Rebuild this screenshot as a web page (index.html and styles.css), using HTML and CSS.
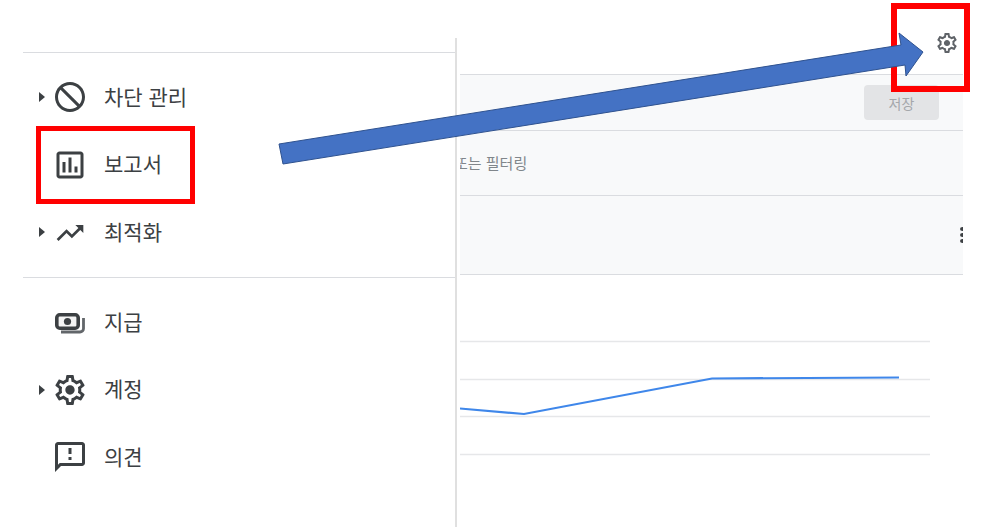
FILE: index.html
```html
<!DOCTYPE html>
<html lang="ko">
<head>
    <meta charset="UTF-8">
    <meta name="viewport" content="width=device-width, initial-scale=1.0">
    <title>보고서 설정</title>
    <link rel="stylesheet" href="styles.css">
</head>
<body>
    <div class="page">
        <nav class="sidenav">
            <ul class="nav-group">
                <li class="nav-item">
                    <span class="caret"></span>
                    <svg class="nav-icon" viewBox="0 0 24 24"><path d="M12 2C6.48 2 2 6.48 2 12s4.48 10 10 10 10-4.48 10-10S17.52 2 12 2zM20 12c0-4.42-3.58-8-8-8-1.85 0-3.55.63-4.9 1.69L18.31 16.9C19.37 15.55 20 13.85 20 12zm-8 8c1.85 0 3.55-.63 4.9-1.69L5.69 7.1C4.63 8.45 4 10.15 4 12c0 4.42 3.58 8 8 8z" fill-rule="evenodd"/></svg>
                    <span>차단 관리</span>
                </li>
                <li class="nav-item">
                    <span></span>
                    <svg class="nav-icon" viewBox="0 0 24 24"><path d="M19 3H5c-1.1 0-2 .9-2 2v14c0 1.1.9 2 2 2h14c1.1 0 2-.9 2-2V5c0-1.1-.9-2-2-2zm0 16H5V5h14v14zM7 10h2v7H7zm4-3h2v10h-2zm4 6h2v4h-2z"/></svg>
                    <span>보고서</span>
                </li>
                <li class="nav-item">
                    <span class="caret"></span>
                    <svg class="nav-icon trend-icon" viewBox="0 0 24 24"><path d="M16 6l2.29 2.29-4.88 4.88-4-4L2 16.59 3.41 18l6-6 4 4 6.3-6.29L22 12V6z"/></svg>
                    <span>최적화</span>
                </li>
            </ul>
            <ul class="nav-group">
                <li class="nav-item">
                    <span></span>
                    <svg class="nav-icon money-icon" viewBox="0 0 36 36">
                        <rect class="money-bill" x="4.8" y="10.8" width="21.4" height="13.4" rx="3"/>
                        <circle class="money-dot" cx="15.5" cy="17.5" r="3.6"/>
                        <path class="money-stack" d="M31.5 14v10.5a3.5 3.5 0 0 1-3.5 3.5H9"/>
                    </svg>
                    <span>지급</span>
                </li>
                <li class="nav-item">
                    <span class="caret"></span>
                    <svg class="nav-icon" viewBox="0 0 24 24"><path d="M19.43 12.98c.04-.32.07-.64.07-.98 0-.34-.03-.66-.07-.98l2.11-1.65c.19-.15.24-.42.12-.64l-2-3.46c-.09-.16-.26-.25-.44-.25-.06 0-.12.01-.17.03l-2.49 1c-.52-.4-1.08-.73-1.69-.98l-.38-2.65C14.46 2.18 14.25 2 14 2h-4c-.25 0-.46.18-.49.42l-.38 2.65c-.61.25-1.17.59-1.69.98l-2.49-1c-.06-.02-.12-.03-.18-.03-.17 0-.34.09-.43.25l-2 3.46c-.13.22-.07.49.12.64l2.11 1.65c-.04.32-.07.65-.07.98 0 .33.03.66.07.98l-2.11 1.65c-.19.15-.24.42-.12.64l2 3.46c.09.16.26.25.44.25.06 0 .12-.01.17-.03l2.49-1c.52.4 1.08.73 1.69.98l.38 2.65c.03.24.24.42.49.42h4c.25 0 .46-.18.49-.42l.38-2.65c.61-.25 1.17-.59 1.69-.98l2.49 1c.06.02.12.03.18.03.17 0 .34-.09.43-.25l2-3.46c.12-.22.07-.49-.12-.64l-2.11-1.65zm-1.98-1.71c.04.31.05.52.05.73 0 .21-.02.43-.05.73l-.14 1.13.89.7 1.08.84-.7 1.21-1.27-.51-1.04-.42-.9.68c-.43.32-.84.56-1.25.73l-1.06.43-.16 1.13-.2 1.35h-1.4l-.19-1.35-.16-1.13-1.06-.43c-.43-.18-.83-.41-1.23-.71l-.91-.7-1.06.43-1.27.51-.7-1.21 1.08-.84.89-.7-.14-1.13c-.03-.31-.05-.54-.05-.74s.02-.43.05-.73l.14-1.13-.89-.7-1.08-.84.7-1.21 1.27.51 1.04.42.9-.68c.43-.32.84-.56 1.25-.73l1.06-.43.16-1.13.2-1.35h1.39l.19 1.35.16 1.13 1.06.43c.43.18.83.41 1.23.71l.91.7 1.06-.43 1.27-.51.7 1.21-1.07.85-.89.7.14 1.13zM12 8.9c-1.71 0-3.1 1.39-3.1 3.1s1.39 3.1 3.1 3.1 3.1-1.39 3.1-3.1-1.39-3.1-3.1-3.1z"/></svg>
                    <span>계정</span>
                </li>
                <li class="nav-item">
                    <span></span>
                    <svg class="nav-icon" viewBox="0 0 24 24"><path d="M20 2H4c-1.1 0-1.99.9-1.99 2L2 22l4-4h14c1.1 0 2-.9 2-2V4c0-1.1-.9-2-2-2zm0 14H5.17L4 17.17V4h16v12zm-9-4h2v2h-2zm0-6h2v4h-2z"/></svg>
                    <span>의견</span>
                </li>
            </ul>
        </nav>

        <main class="content">
            <header class="topbar">
                <svg class="gear" viewBox="0 0 24 24"><path d="M19.43 12.98c.04-.32.07-.64.07-.98 0-.34-.03-.66-.07-.98l2.11-1.65c.19-.15.24-.42.12-.64l-2-3.46c-.09-.16-.26-.25-.44-.25-.06 0-.12.01-.17.03l-2.49 1c-.52-.4-1.08-.73-1.69-.98l-.38-2.65C14.46 2.18 14.25 2 14 2h-4c-.25 0-.46.18-.49.42l-.38 2.65c-.61.25-1.17.59-1.69.98l-2.49-1c-.06-.02-.12-.03-.18-.03-.17 0-.34.09-.43.25l-2 3.46c-.13.22-.07.49.12.64l2.11 1.65c-.04.32-.07.65-.07.98 0 .33.03.66.07.98l-2.11 1.65c-.19.15-.24.42-.12.64l2 3.46c.09.16.26.25.44.25.06 0 .12-.01.17-.03l2.49-1c.52.4 1.08.73 1.69.98l.38 2.65c.03.24.24.42.49.42h4c.25 0 .46-.18.49-.42l.38-2.65c.61-.25 1.17-.59 1.69-.98l2.49 1c.06.02.12.03.18.03.17 0 .34-.09.43-.25l2-3.46c.12-.22.07-.49-.12-.64l-2.11-1.65zm-1.98-1.71c.04.31.05.52.05.73 0 .21-.02.43-.05.73l-.14 1.13.89.7 1.08.84-.7 1.21-1.27-.51-1.04-.42-.9.68c-.43.32-.84.56-1.25.73l-1.06.43-.16 1.13-.2 1.35h-1.4l-.19-1.35-.16-1.13-1.06-.43c-.43-.18-.83-.41-1.23-.71l-.91-.7-1.06.43-1.27.51-.7-1.21 1.08-.84.89-.7-.14-1.13c-.03-.31-.05-.54-.05-.74s.02-.43.05-.73l.14-1.13-.89-.7-1.08-.84.7-1.21 1.27.51 1.04.42.9-.68c.43-.32.84-.56 1.25-.73l1.06-.43.16-1.13.2-1.35h1.39l.19 1.35.16 1.13 1.06.43c.43.18.83.41 1.23.71l.91.7 1.06-.43 1.27-.51.7 1.21-1.07.85-.89.7.14 1.13zM12 8.9c-1.71 0-3.1 1.39-3.1 3.1s1.39 3.1 3.1 3.1 3.1-1.39 3.1-3.1-1.39-3.1-3.1-3.1z"/></svg>
            </header>
            <div class="band save-row">
                <button class="save-btn" disabled>저장</button>
            </div>
            <div class="band filter-row">
                <span class="filter-text">또는 필터링</span>
            </div>
            <div class="band table-row">
                <span class="kebab"><i></i><i></i><i></i></span>
            </div>
            <svg class="chart" viewBox="0 0 470 252" width="470" height="252">
                <g class="gridline">
                    <line x1="0" y1="66.5" x2="470" y2="66.5"/>
                    <line x1="0" y1="104.5" x2="470" y2="104.5"/>
                    <line x1="0" y1="141.5" x2="470" y2="141.5"/>
                    <line x1="0" y1="179.5" x2="470" y2="179.5"/>
                </g>
                <polyline class="series" points="0,133.5 64,139 252,103.5 439,102.5"/>
            </svg>
        </main>
    </div>

    <!-- annotations drawn on top of the screenshot -->
    <div class="mark mark-report"></div>
    <div class="mark mark-gear"></div>
    <svg class="arrow" viewBox="0 0 991 531" width="991" height="531">
        <polygon points="279,144 901,45 899,33 923,52 906,76 905,65 283,164"/>
    </svg>
</body>
</html>
```

FILE: styles.css
```css
:root {
    --line: #dadce0;
    --band: #f8f9fa;
    --text: #3c4043;
    --icon: #3c4043;
}
* {
    box-sizing: border-box;
}
html, body {
    height: 100%;
}
body {
    margin: 0;
    background: white;
    color: var(--text);
    font-family: "Noto Sans CJK KR", "Noto Sans", sans-serif;
    overflow: hidden;
}
.page {
    display: flex;
    height: 527px;
}
.sidenav {
    width: 457px;
    margin-top: 38px;
    padding: 14px 0 0 23px;
    border-right: 2px solid #e0e0e0;
}
.nav-group {
    list-style: none;
    margin: 0;
    padding: 10.5px 0 11px;
    border-top: 1px solid var(--line);
}
.nav-item {
    display: grid;
    grid-template-columns: 13px 36px auto;
    align-items: center;
    height: 67.5px;
    padding-left: 16px;
    font-size: 21px;
}
.nav-item span:last-child {
    margin: -2px 0 0 16px;
    line-height: 1;
}
.caret {
    width: 0;
    height: 0;
    border-left: 6px solid var(--icon);
    border-top: 5px solid transparent;
    border-bottom: 5px solid transparent;
}
.nav-icon {
    width: 36px;
    height: 36px;
    fill: var(--icon);
}
.trend-icon {
    justify-self: center;
    width: 32px;
    height: 32px;
    margin-top: 2px;
}
.money-bill {
    fill: #f4f4f4;
    stroke: #3c4043;
    stroke-width: 3.6;
}
.money-dot {
    fill: #3c4043;
}
.money-stack {
    fill: none;
    stroke: #62666a;
    stroke-width: 2.8;
}
.content {
    width: 503px;
    margin-left: 3px;
    overflow: hidden;
}
.topbar {
    display: flex;
    justify-content: flex-end;
    height: 75px;
    padding: 31px 4px 0 0;
    border-bottom: 1px solid var(--line);
}
.gear {
    width: 24px;
    height: 24px;
    fill: #5f6368;
}
.band {
    display: flex;
    align-items: center;
    background: var(--band);
    border-bottom: 1px solid var(--line);
}
.save-row {
    justify-content: flex-end;
    height: 56px;
    padding-right: 24px;
}
.save-btn {
    width: 75px;
    height: 35px;
    border: 0;
    border-radius: 4px;
    background: #e3e4e6;
    color: #a4a7ab;
    font-family: inherit;
    font-size: 14px;
}
.filter-row {
    height: 65px;
    overflow: hidden;
}
.filter-text {
    margin: -2px 0 0 -6px;
    color: #80868b;
    font-size: 15px;
}
.table-row {
    justify-content: flex-end;
    height: 79px;
}
.kebab {
    display: flex;
    flex-direction: column;
    gap: 2px;
    width: 3px;
    overflow: hidden;
}
.kebab i {
    flex: none;
    width: 5px;
    height: 4px;
    border-radius: 50%;
    background: #3c4043;
}
.chart {
    display: block;
}
.gridline line {
    stroke: #e6e7e9;
    stroke-width: 1.5;
}
.series {
    fill: none;
    stroke: #3f87ea;
    stroke-width: 2.2;
}
.mark {
    position: absolute;
    border-style: solid;
    border-color: #ff0000;
}
.mark-report {
    left: 36px;
    top: 126px;
    width: 159px;
    height: 78px;
    border-width: 5px;
}
.mark-gear {
    left: 891px;
    top: 3px;
    width: 79px;
    height: 89px;
    border-width: 6px;
}
.arrow {
    position: absolute;
    left: 0;
    top: 0;
    pointer-events: none;
}
.arrow polygon {
    fill: #4472c4;
    stroke: #2f528f;
    stroke-width: 1;
}
```
